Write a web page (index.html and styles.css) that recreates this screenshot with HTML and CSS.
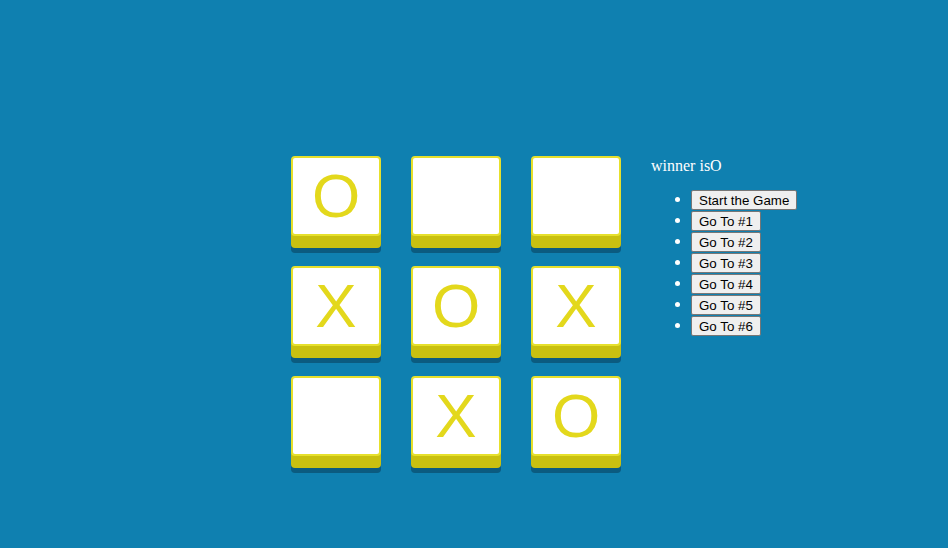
FILE: index.html
```html
<!DOCTYPE html>
<html>
<head>
<meta charset="utf-8">
<link rel="stylesheet" href="styles.css">
</head>
<body>
<div class="game">
  <div class="board">
    <button class="square">O</button>
    <button class="square"></button>
    <button class="square"></button>
    <button class="square">X</button>
    <button class="square">O</button>
    <button class="square">X</button>
    <button class="square"></button>
    <button class="square">X</button>
    <button class="square">O</button>
  </div>
  <div class="info">
    <div class="status">winner isO</div>
    <ul class="moves">
      <li><button class="move">Start the Game</button></li>
      <li><button class="move">Go To #1</button></li>
      <li><button class="move">Go To #2</button></li>
      <li><button class="move">Go To #3</button></li>
      <li><button class="move">Go To #4</button></li>
      <li><button class="move">Go To #5</button></li>
      <li><button class="move">Go To #6</button></li>
    </ul>
  </div>
</div>
</body>
</html>
```
FILE: styles.css
```css
html, body {
  margin: 0;
  padding: 0;
  background: #0f80b0;
  height: 100%;
}
body {
  font-family: "Liberation Serif", "Times New Roman", serif;
}
.game {
  display: flex;
  align-items: flex-start;
  padding-top: 156px;
  padding-left: 291px;
}
.board {
  display: grid;
  grid-template-columns: repeat(3, 90px);
  grid-auto-rows: 80px;
  column-gap: 30px;
  row-gap: 30px;
}
.square {
  box-sizing: border-box;
  width: 90px;
  height: 80px;
  margin: 0;
  padding: 0;
  background: #ffffff;
  border: 2px solid #e6e02c;
  border-radius: 4px;
  box-shadow: 0 12px 0 #c9c010, 0 17px 0 #0b5b80;
  color: #e3d81c;
  font-family: "Liberation Sans", Arial, sans-serif;
  font-size: 62px;
  line-height: 76px;
  text-align: center;
}
.info {
  margin-left: 30px;
  color: #ffffff;
  font-size: 16px;
}
.status {
  line-height: 18px;
  padding-top: 1px;
}
.moves {
  margin: 15px 0 0 0;
  padding-left: 40px;
}
.moves li {
  line-height: 18px;
  height: 21px;
}
.move {
  box-sizing: border-box;
  height: 20px;
  margin: 0;
  padding: 1px 7px;
  font-family: "Liberation Sans", Arial, sans-serif;
  font-size: 13.333px;
  color: #000;
  background: #efefef;
  border: 1px solid #767676;
  border-radius: 2px;
  vertical-align: top;
}
```
